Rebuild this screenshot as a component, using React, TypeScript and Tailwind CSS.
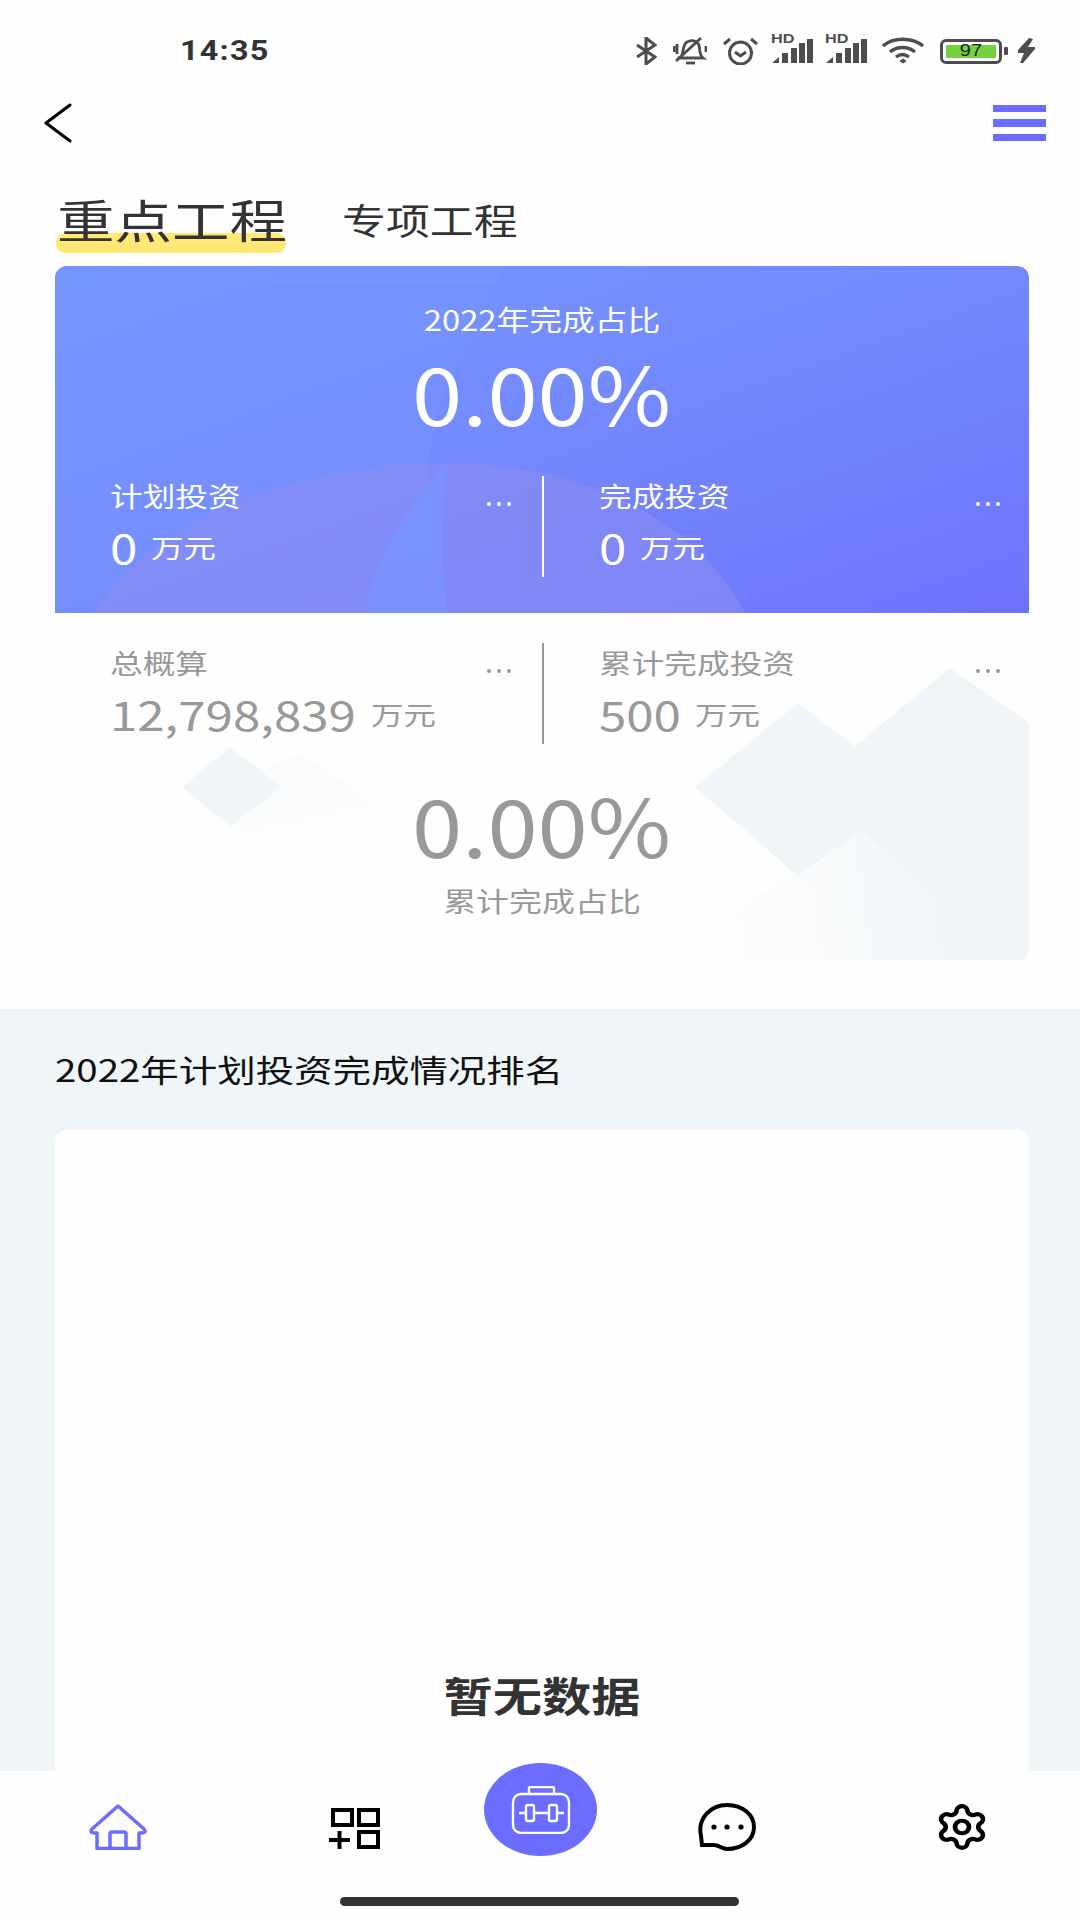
import React from "react";
import { Settings } from "lucide-react";

const cjk = { fontFamily: '"Noto Sans CJK SC", "Noto Sans", sans-serif' };

//---------------------------------Status bar---------------------------------
const Signal = () => (
  <div className="relative w-[42px] h-[26px]">
    <span
      className="absolute left-0 top-[-5px] text-[13px] leading-[12px] font-bold text-[#4d4d4d] scale-x-[1.25] origin-left"
      style={{ fontFamily: '"Liberation Sans", sans-serif' }}
    >
      HD
    </span>
    <svg width="42" height="26" viewBox="0 0 42 26" className="absolute inset-0" fill="#4d4d4d">
      <path d="M1 25 L8 19 V25 Z" />
      <rect x="11" y="15" width="6" height="10" />
      <rect x="20" y="10" width="6" height="15" />
      <rect x="28" y="5" width="6" height="20" />
      <rect x="36" y="1" width="6" height="24" />
    </svg>
  </div>
);

const StatusBar = () => (
  <div className="h-[72px] flex items-start pl-[180px] pr-[45px] pt-[36px] text-[#4d4d4d]">
    <span
      className="text-[27px] leading-[30px] font-bold text-[#333] tracking-[1px] scale-x-[1.2] origin-left"
      style={{ fontFamily: 'Roboto, "Liberation Sans", sans-serif' }}
    >
      14:35
    </span>
    <div className="ml-auto flex items-center h-[30px]">
      <svg width="21" height="28" viewBox="0 0 21 28" fill="none" stroke="#4d4d4d" strokeWidth="3">
        <path d="M1 8 L19 20 L10 27 V1 L19 8 L1 20" />
      </svg>
      <svg width="34" height="28" viewBox="0 0 34 28" fill="none" stroke="#4d4d4d" strokeWidth="2.8" className="ml-[16px]">
        <path d="M8 20 C11 16 9 8 14 5 C19 2 24 4 26 8 C27 12 26 18 30 21 H5 Z" />
        <path d="M3 24 L28 1" />
        <path d="M13 26 H22" />
        <path d="M1 9 V15 M4 7 V17 M33 9 V15" />
      </svg>
      <svg width="35" height="28" viewBox="0 0 35 28" fill="none" stroke="#4d4d4d" strokeWidth="3" className="ml-[16px]">
        <circle cx="17.5" cy="16" r="11" />
        <path d="M12 15 L17.5 19 L23 15" />
        <path d="M1 7 L7 2 M34 7 L28 2" />
      </svg>
      <div className="ml-[13px]">
        <Signal />
      </div>
      <div className="ml-[12px]">
        <Signal />
      </div>
      <svg width="43" height="28" viewBox="0 0 43 28" fill="none" stroke="#4d4d4d" strokeWidth="3.4" className="ml-[15px]">
        <path d="M1 9 C11 0 30 0 41 9" />
        <path d="M8 15 C15 9 26 9 33 15" />
        <path d="M14 20 C18 17 23 17 27 20" />
        <path d="M18 24 L21 22 L24 24 L21 26 Z" fill="#4d4d4d" strokeWidth="1" />
      </svg>
      <div className="ml-[15px] w-[68px] flex items-center">
        <div className="w-[62px] h-[25px] border-[3px] border-[#4d4d4d] rounded-[6px] p-[3px]">
          <div className="w-full h-full bg-[#76d13e] rounded-[1px] flex items-center justify-center">
            <span className="text-[16px] leading-none text-[#222] scale-x-[1.25]" style={{ fontFamily: '"Liberation Sans", sans-serif' }}>
              97
            </span>
          </div>
        </div>
        <div className="ml-[2px] w-[4px] h-[8px] bg-[#4d4d4d] rounded-[1px]" />
      </div>
      <svg width="18" height="26" viewBox="0 0 18 26" fill="#4d4d4d" className="ml-[9px]">
        <path d="M12 0 L1 12 L1 15 L7 15 L3 25 L6 25 L18 11 L18 9 L11 9 L16 1 Z" />
      </svg>
    </div>
  </div>
);

//---------------------------------Card parts---------------------------------
const Dots = ({ color }: { color: string }) => (
  <div className="flex gap-[6px]">
    <span className={`w-[4px] h-[4px] rounded-full ${color}`} />
    <span className={`w-[4px] h-[4px] rounded-full ${color}`} />
    <span className={`w-[4px] h-[4px] rounded-full ${color}`} />
  </div>
);

interface CellProps {
  label: string;
  value: string;
  textColor: string;
  dotColor: string;
  className: string;
  valueWidth: string;
}

const Cell: React.FC<CellProps> = ({ label, value, textColor, dotColor, className, valueWidth }) => (
  <div className={`flex-1 min-w-0 ${className} ${textColor}`}>
    <div className="flex justify-between h-[42px]">
      <span className="text-[27px] leading-[40px] scale-x-[1.21] origin-left whitespace-nowrap">{label}</span>
      <div className="pt-[26px]">
        <Dots color={dotColor} />
      </div>
    </div>
    <div className="flex mt-[7px] h-[42px] items-center">
      <span className={`text-[41px] leading-[42px] scale-x-[1.2] origin-left whitespace-nowrap ${valueWidth}`}>
        {value}
      </span>
      <span className="text-[26px] leading-[42px] mt-[2px] scale-x-[1.25] origin-left whitespace-nowrap">万元</span>
    </div>
  </div>
);

//---------------------------------Tab icons---------------------------------
const TabBar = () => (
  <div className="h-[149px] bg-[#fefefe] relative">
    <div className="h-[126px] flex items-start">
      <svg width="58" height="46" viewBox="0 0 58 46" fill="none" stroke="#6a6dff" strokeWidth="3.5" strokeLinejoin="round" className="ml-[89px] mt-[33px]">
        <path d="M29 2 L55 25 Q58 29 52 29 H50 V44.5 H8 V29 H6 Q0 29 3 25 Z" />
        <path d="M21 44 V30 Q21 28 23 28 H35 Q37 28 37 30 V44" />
      </svg>
      <svg width="52" height="42" viewBox="0 0 52 42" fill="none" stroke="#000" strokeWidth="4" className="ml-[181px] mt-[37px]">
        <rect x="5" y="2" width="19" height="15" />
        <rect x="31" y="2" width="19" height="15" />
        <rect x="31" y="24" width="19" height="15" />
        <path d="M1 32 H22 M11.5 23 V41" />
      </svg>
      <div className="ml-[104px] -mt-[8px] w-[113px] h-[93px] rounded-[50%] bg-[#6a6dff] flex items-center justify-center">
        <svg width="60" height="48" viewBox="0 0 60 48" fill="none" stroke="#fff" strokeWidth="2.4">
          <rect x="2" y="8" width="56" height="39" rx="8" />
          <path d="M18 8 V2 Q18 1 20 1 H41 Q43 1 43 2 V8" />
          <path d="M8 27 H15 M23 27 H38 M46 27 H53" />
          <rect x="15" y="19" width="8" height="16" rx="2" />
          <rect x="38" y="19" width="8" height="16" rx="2" />
        </svg>
      </div>
      <svg width="58" height="48" viewBox="0 0 58 48" fill="none" stroke="#000" strokeWidth="4" className="ml-[101px] mt-[32px]">
        <path d="M3 33 C-1 14 14 2 29 2 C45 2 56 12 56 24 C56 37 44 46 29 46 C24 46 21 42 16 42 H4 Z" />
        <circle cx="16" cy="24" r="2.6" fill="#000" stroke="none" />
        <circle cx="29" cy="24" r="2.6" fill="#000" stroke="none" />
        <circle cx="43" cy="24" r="2.6" fill="#000" stroke="none" />
      </svg>
      <Settings
        width={56}
        height={50}
        strokeWidth={2}
        color="#000"
        preserveAspectRatio="none"
        className="ml-[178px] mt-[31px]"
      />
    </div>
    <div className="ml-[340px] w-[399px] h-[9px] rounded-full bg-[#333]" />
  </div>
);

//---------------------------------UI---------------------------------
const App = () => {
  return (
    <div className="w-[1080px] h-[1920px] overflow-hidden flex flex-col bg-[#fefefe]" style={cjk}>
      <StatusBar />

      {/* back + menu */}
      <div className="h-[102px] flex items-center justify-between pl-[44px] pr-[34px]">
        <svg width="28" height="40" viewBox="0 0 28 40" fill="none" stroke="#000" strokeWidth="3" strokeLinecap="round" strokeLinejoin="round">
          <path d="M26 2 L2 20 L26 38" />
        </svg>
        <div className="flex flex-col gap-[7px]">
          <div className="w-[53px] h-[7.5px] bg-[#6a6dff]" />
          <div className="w-[53px] h-[7.5px] bg-[#6a6dff]" />
          <div className="w-[53px] h-[7.5px] bg-[#6a6dff]" />
        </div>
      </div>

      {/* tabs */}
      <div className="h-[92px] flex pl-[56px] text-[#333]">
        <div className="relative w-[230px] h-[79px]">
          <div className="absolute left-0 top-[59px] w-[230px] h-[20px] rounded-[9px] bg-[#ffe873]" />
          <span className="absolute left-[1px] top-[16px] text-[46px] leading-[56px] scale-x-[1.25] origin-left whitespace-nowrap">
            重点工程
          </span>
        </div>
        <span className="ml-[56px] mt-[20px] text-[36px] leading-[50px] scale-x-[1.22] origin-left whitespace-nowrap">专项工程</span>
      </div>

      {/* blue card */}
      <div className="relative mx-[55px] w-[974px] h-[347px] rounded-t-[12px] overflow-hidden bg-gradient-to-br from-[#7697ff] via-[#7389fd] to-[#6f72fb] text-white">
        <svg viewBox="0 0 974 347" width="974" height="347" className="absolute inset-0">
          <path d="M0 0 H451 C410 70 380 130 374 194 C370 250 385 300 393 347 H0 Z" fill="#7797ff" opacity="0.4" />
          <path d="M39 347 C110 240 260 197 393 197 C520 197 640 250 690 347 Z" fill="#8c8cf0" opacity="0.6" />
          <path d="M310 347 C320 290 360 230 393 197 C385 250 385 300 393 347 Z" fill="#7895ff" opacity="0.7" />
        </svg>
        <div className="relative flex flex-col items-center pt-[33px]">
          <span className="h-[40px] text-[28px] leading-[40px] scale-x-[1.17] whitespace-nowrap">2022年完成占比</span>
          <span className="mt-[17px] h-[70px] text-[80px] leading-[70px] scale-x-[1.13] whitespace-nowrap">0.00%</span>
          <div className="w-full mt-[50px] h-[101px] flex">
            <Cell label="计划投资" value="0" textColor="text-white" dotColor="bg-white" className="pl-[55px] pr-[31px]" valueWidth="w-[41px]" />
            <div className="w-[2px] bg-white" />
            <Cell label="完成投资" value="0" textColor="text-white" dotColor="bg-white" className="pl-[55px] pr-[29px]" valueWidth="w-[41px]" />
          </div>
        </div>
      </div>

      {/* white stats */}
      <div className="relative h-[396px] text-[#999]">
        <svg viewBox="0 0 1080 396" width="1080" height="396" className="absolute inset-0">
          <defs>
            <linearGradient id="fade" gradientUnits="userSpaceOnUse" x1="1000" y1="300" x2="700" y2="347">
              <stop offset="0" stopColor="#f0f5f8" />
              <stop offset="1" stopColor="#f0f5f8" stopOpacity="0" />
            </linearGradient>
            <linearGradient id="fadeSmall" x1="0" y1="0" x2="0.3" y2="1">
              <stop offset="0" stopColor="#f0f5f8" stopOpacity="0.45" />
              <stop offset="1" stopColor="#f0f5f8" stopOpacity="0" />
            </linearGradient>
          </defs>
          <path d="M230 134 L282 174 L230 213 L182 174 Z" fill="#f0f5f8" />
          <path d="M300 140 L386 197 L285 256 L230 213 L282 174 L262 158 Z" fill="url(#fadeSmall)" />
          <path d="M860 217 L1017 347 H660 Z" fill="url(#fade)" />
          <path d="M950 55 L1029 110 V335 Q1029 347 1017 347 L860 217 L798 263 L695 174 L798 90 L855 133 Z" fill="#f0f5f8" />
        </svg>
        <div className="relative flex flex-col items-center pt-[30px] pl-[55px] pr-[51px]">
          <div className="w-full h-[101px] flex">
            <Cell label="总概算" value="12,798,839" textColor="text-[#999]" dotColor="bg-[#999]" className="pl-[55px] pr-[31px]" valueWidth="w-[261px]" />
            <div className="w-[2px] bg-[#999]" />
            <Cell label="累计完成投资" value="500" textColor="text-[#999]" dotColor="bg-[#999]" className="pl-[55px] pr-[29px]" valueWidth="w-[96px]" />
          </div>
          <span className="mt-[44px] h-[70px] text-[80px] leading-[70px] scale-x-[1.13] whitespace-nowrap">0.00%</span>
          <span className="mt-[23px] h-[40px] text-[27px] leading-[40px] scale-x-[1.22] whitespace-nowrap">累计完成占比</span>
        </div>
      </div>

      {/* ranking */}
      <div className="flex-1 min-h-0 bg-[#f0f5f8] flex flex-col pl-[55px] pr-[51px] pt-[40px]">
        <span className="h-[40px] text-[31px] leading-[40px] text-[#111] scale-x-[1.24] origin-left whitespace-nowrap">
          2022年计划投资完成情况排名
        </span>
        <div className="flex-1 mt-[41px] bg-[#fefefe] rounded-t-[12px] flex justify-center pt-[539px]">
          <span className="text-[41px] leading-[50px] font-bold text-[#333] scale-x-[1.2] whitespace-nowrap h-[50px]">暂无数据</span>
        </div>
      </div>

      <TabBar />
    </div>
  );
};

export default App;
